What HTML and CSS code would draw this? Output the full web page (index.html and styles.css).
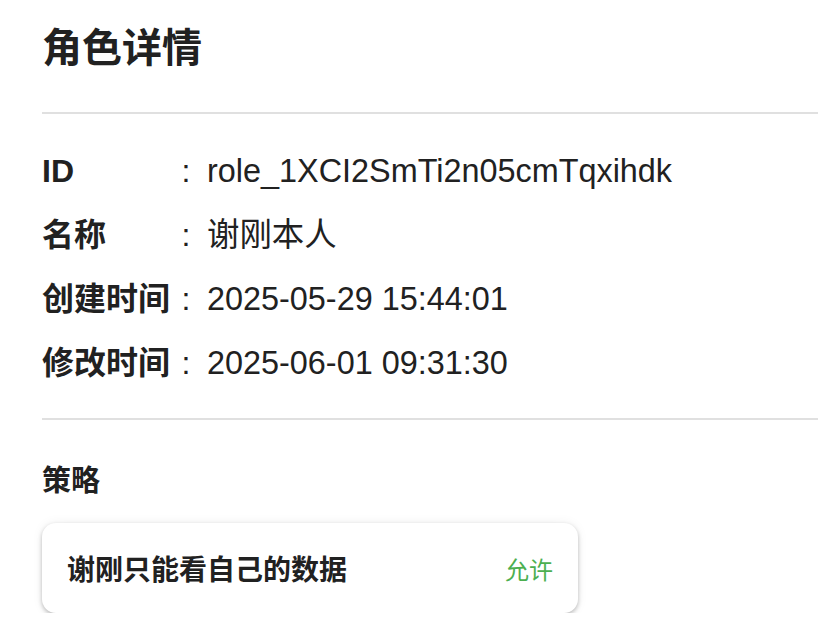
FILE: index.html
```html
<!DOCTYPE html>
<html lang="zh-CN">
<head>
  <meta charset="UTF-8">
  <meta name="viewport" content="width=device-width, initial-scale=1.0">
  <title>角色详情</title>
  <link rel="stylesheet" href="styles.css">
</head>
<body>
  <div class="page">
    <h1 class="title">角色详情</h1>
    <hr class="divider">

    <div class="info">
      <div class="row">
        <span class="label">ID</span>
        <span class="colon">:</span>
        <span class="value">role_1XCI2SmTi2n05cmTqxihdk</span>
      </div>
      <div class="row">
        <span class="label">名称</span>
        <span class="colon">:</span>
        <span class="value">谢刚本人</span>
      </div>
      <div class="row">
        <span class="label">创建时间</span>
        <span class="colon">:</span>
        <span class="value">2025-05-29 15:44:01</span>
      </div>
      <div class="row">
        <span class="label">修改时间</span>
        <span class="colon">:</span>
        <span class="value">2025-06-01 09:31:30</span>
      </div>
    </div>

    <hr class="divider">

    <h2 class="section">策略</h2>
    <div class="policy-card">
      <span class="policy-name">谢刚只能看自己的数据</span>
      <span class="policy-effect">允许</span>
    </div>
  </div>
</body>
</html>
```

FILE: styles.css
```css
body {
  margin: 0;
  padding: 0;
  background: #fff;
  color: #212121;
  font-family: "Liberation Sans", "Noto Sans CJK SC", sans-serif;
}

.page {
  padding: 20px 0 0 42px;
}

.title {
  margin: 0;
  font-size: 40px;
  line-height: 56px;
  font-weight: 700;
}

.divider {
  margin: 36px 0 0 0;
  border: 0;
  height: 2px;
  background: #e0e0e0;
}

.info {
  display: flex;
  flex-direction: column;
  gap: 16px;
  padding: 33px 0 31px 0;
}

.info + .divider {
  margin-top: 0;
}

.row {
  display: flex;
  align-items: center;
  font-size: 32px;
  line-height: 48px;
}

.label {
  width: 132px;
  font-weight: 700;
}

.colon {
  width: 24px;
  text-align: center;
}

.value {
  margin-left: 9px;
  font-size: 32.4px;
}

.section {
  margin: 41px 0 0 0;
  font-size: 29px;
  line-height: 40px;
  font-weight: 700;
}

.policy-card {
  display: flex;
  justify-content: space-between;
  align-items: center;
  width: 536px;
  height: 90px;
  box-sizing: border-box;
  margin-top: 22px;
  padding: 0 25px;
  border-radius: 14px;
  background: #fff;
  box-shadow: 0 2px 4px rgba(0, 0, 0, 0.25), 0 0 12px rgba(0, 0, 0, 0.06);
}

.policy-name {
  font-size: 28px;
  font-weight: 700;
}

.policy-effect {
  font-size: 24px;
  color: #4caf50;
}
```
